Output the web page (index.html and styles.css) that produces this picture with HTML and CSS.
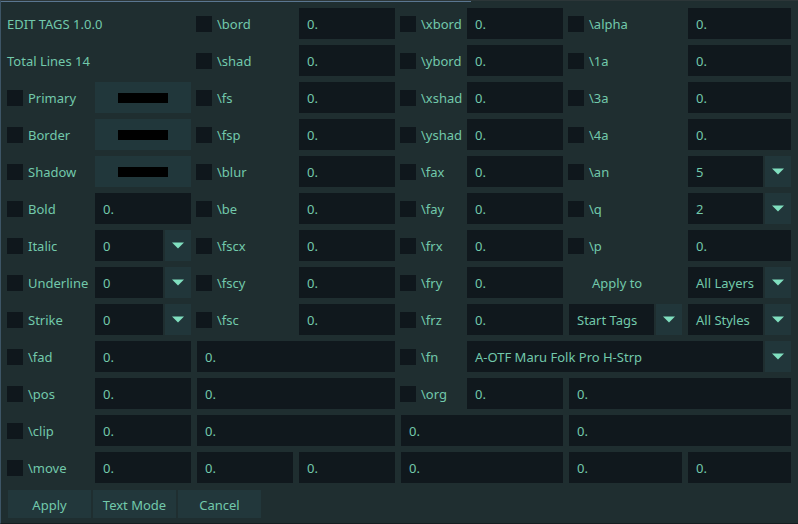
FILE: index.html
```html
<!DOCTYPE html>
<html>
<head>
<meta charset="utf-8">
<link rel="stylesheet" href="styles.css">
</head>
<body>
<div class="win">
  <div class="grid">
    <!-- row 1 -->
    <div class="text span2">EDIT TAGS 1.0.0</div>
    <label class="chk"><span class="box"></span>\bord</label>
    <div class="inp">0.</div>
    <label class="chk"><span class="box"></span>\xbord</label>
    <div class="inp">0.</div>
    <label class="chk"><span class="box"></span>\alpha</label>
    <div class="inp">0.</div>
    <!-- row 2 -->
    <div class="text span2">Total Lines 14</div>
    <label class="chk"><span class="box"></span>\shad</label>
    <div class="inp">0.</div>
    <label class="chk"><span class="box"></span>\ybord</label>
    <div class="inp">0.</div>
    <label class="chk"><span class="box"></span>\1a</label>
    <div class="inp">0.</div>
    <!-- row 3 -->
    <label class="chk first"><span class="box"></span>Primary</label>
    <div class="swatch"><span class="sw"></span></div>
    <label class="chk"><span class="box"></span>\fs</label>
    <div class="inp">0.</div>
    <label class="chk"><span class="box"></span>\xshad</label>
    <div class="inp">0.</div>
    <label class="chk"><span class="box"></span>\3a</label>
    <div class="inp">0.</div>
    <!-- row 4 -->
    <label class="chk first"><span class="box"></span>Border</label>
    <div class="swatch"><span class="sw"></span></div>
    <label class="chk"><span class="box"></span>\fsp</label>
    <div class="inp">0.</div>
    <label class="chk"><span class="box"></span>\yshad</label>
    <div class="inp">0.</div>
    <label class="chk"><span class="box"></span>\4a</label>
    <div class="inp">0.</div>
    <!-- row 5 -->
    <label class="chk first"><span class="box"></span>Shadow</label>
    <div class="swatch"><span class="sw"></span></div>
    <label class="chk"><span class="box"></span>\blur</label>
    <div class="inp">0.</div>
    <label class="chk"><span class="box"></span>\fax</label>
    <div class="inp">0.</div>
    <label class="chk"><span class="box"></span>\an</label>
    <div class="combo"><div class="inp">5</div><div class="arr"><svg width="12" height="7" viewBox="0 0 12 7"><polygon points="0,0.5 12,0.5 6,6.5"/></svg></div></div>
    <!-- row 6 -->
    <label class="chk first"><span class="box"></span>Bold</label>
    <div class="inp">0.</div>
    <label class="chk"><span class="box"></span>\be</label>
    <div class="inp">0.</div>
    <label class="chk"><span class="box"></span>\fay</label>
    <div class="inp">0.</div>
    <label class="chk"><span class="box"></span>\q</label>
    <div class="combo"><div class="inp">2</div><div class="arr"><svg width="12" height="7" viewBox="0 0 12 7"><polygon points="0,0.5 12,0.5 6,6.5"/></svg></div></div>
    <!-- row 7 -->
    <label class="chk first"><span class="box"></span>Italic</label>
    <div class="combo"><div class="inp">0</div><div class="arr"><svg width="12" height="7" viewBox="0 0 12 7"><polygon points="0,0.5 12,0.5 6,6.5"/></svg></div></div>
    <label class="chk"><span class="box"></span>\fscx</label>
    <div class="inp">0.</div>
    <label class="chk"><span class="box"></span>\frx</label>
    <div class="inp">0.</div>
    <label class="chk"><span class="box"></span>\p</label>
    <div class="inp">0.</div>
    <!-- row 8 -->
    <label class="chk first"><span class="box"></span>Underline</label>
    <div class="combo"><div class="inp">0</div><div class="arr"><svg width="12" height="7" viewBox="0 0 12 7"><polygon points="0,0.5 12,0.5 6,6.5"/></svg></div></div>
    <label class="chk"><span class="box"></span>\fscy</label>
    <div class="inp">0.</div>
    <label class="chk"><span class="box"></span>\fry</label>
    <div class="inp">0.</div>
    <div class="text applyto">Apply to</div>
    <div class="combo"><div class="inp">All Layers</div><div class="arr"><svg width="12" height="7" viewBox="0 0 12 7"><polygon points="0,0.5 12,0.5 6,6.5"/></svg></div></div>
    <!-- row 9 -->
    <label class="chk first"><span class="box"></span>Strike</label>
    <div class="combo"><div class="inp">0</div><div class="arr"><svg width="12" height="7" viewBox="0 0 12 7"><polygon points="0,0.5 12,0.5 6,6.5"/></svg></div></div>
    <label class="chk"><span class="box"></span>\fsc</label>
    <div class="inp">0.</div>
    <label class="chk"><span class="box"></span>\frz</label>
    <div class="inp">0.</div>
    <div class="combo"><div class="inp">Start Tags</div><div class="arr"><svg width="12" height="7" viewBox="0 0 12 7"><polygon points="0,0.5 12,0.5 6,6.5"/></svg></div></div>
    <div class="combo"><div class="inp">All Styles</div><div class="arr"><svg width="12" height="7" viewBox="0 0 12 7"><polygon points="0,0.5 12,0.5 6,6.5"/></svg></div></div>
    <!-- row 10 -->
    <label class="chk first"><span class="box"></span>\fad</label>
    <div class="inp">0.</div>
    <div class="inp span2">0.</div>
    <label class="chk"><span class="box"></span>\fn</label>
    <div class="combo span3"><div class="inp">A-OTF Maru Folk Pro H-Strp</div><div class="arr"><svg width="12" height="7" viewBox="0 0 12 7"><polygon points="0,0.5 12,0.5 6,6.5"/></svg></div></div>
    <!-- row 11 -->
    <label class="chk first"><span class="box"></span>\pos</label>
    <div class="inp">0.</div>
    <div class="inp span2">0.</div>
    <label class="chk"><span class="box"></span>\org</label>
    <div class="inp">0.</div>
    <div class="inp span2">0.</div>
    <!-- row 12 -->
    <label class="chk first"><span class="box"></span>\clip</label>
    <div class="inp">0.</div>
    <div class="inp span2">0.</div>
    <div class="inp span2">0.</div>
    <div class="inp span2">0.</div>
    <!-- row 13 -->
    <label class="chk first"><span class="box"></span>\move</label>
    <div class="inp">0.</div>
    <div class="inp">0.</div>
    <div class="inp">0.</div>
    <div class="inp span2">0.</div>
    <div class="inp">0.</div>
    <div class="inp">0.</div>
  </div>
  <div class="buttons">
    <div class="btn">Apply</div>
    <div class="btn">Text Mode</div>
    <div class="btn">Cancel</div>
  </div>
</div>
</body>
</html>
```
FILE: styles.css
```css
html, body {
  margin: 0;
  padding: 0;
  width: 798px;
  height: 524px;
  overflow: hidden;
}
body {
  background: #1f2e30;
  font-family: "Noto Sans", "DejaVu Sans", sans-serif;
  font-size: 13px;
  color: #72c9ab;
}
.win {
  width: 798px;
  height: 524px;
  box-sizing: border-box;
  border-top: 1px solid #2c3638;
  border-left: 1px solid #3d5566;
  border-bottom: 1px solid #151e20;
  background: linear-gradient(to right, #5a7690 0, #5a7690 470px, transparent 470px) top left / 100% 1px no-repeat;
  padding: 7px 7px 0 6px;
}
.grid {
  display: grid;
  grid-template-columns: 82px 96px 96px 96px 60px 96px 113px 103px;
  grid-auto-rows: 31px;
  gap: 6px;
}
.span2 { grid-column: span 2; }
.span3 { grid-column: span 3; }
.text {
  display: flex;
  align-items: center;
  white-space: nowrap;
}
.applyto { padding-left: 23px; }
.chk {
  display: flex;
  align-items: center;
  gap: 5px;
  white-space: nowrap;
  margin-left: -1px;
}
.chk.first { margin-left: 0; }
.box {
  width: 16px;
  height: 16px;
  background: #0f171c;
  flex: none;
}
.inp {
  background: #10181d;
  display: flex;
  align-items: center;
  padding-left: 8px;
  white-space: nowrap;
  overflow: hidden;
  min-width: 0;
}
.swatch {
  background: #21373b;
  display: flex;
  align-items: center;
  justify-content: center;
}
.sw {
  width: 50px;
  height: 10px;
  background: #000;
}
.combo {
  display: flex;
  gap: 2px;
  min-width: 0;
}
.combo .inp { flex: 1; }
.arr {
  width: 26px;
  flex: none;
  background: #21363a;
  display: flex;
  align-items: center;
  justify-content: center;
}
.arr svg { fill: #80dfbf; display: block; }
.buttons {
  display: flex;
  gap: 2px;
  margin-top: 7px;
  padding-left: 1px;
}
.btn {
  width: 83px;
  height: 28px;
  padding-top: 1px;
  box-sizing: border-box;
  background: #22373b;
  display: flex;
  align-items: center;
  justify-content: center;
}
```
